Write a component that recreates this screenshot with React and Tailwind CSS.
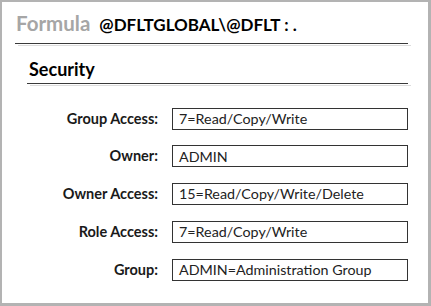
import React from 'react';

const fields = [
  { label: 'Group Access:', value: '7=Read/Copy/Write' },
  { label: 'Owner:', value: 'ADMIN' },
  { label: 'Owner Access:', value: '15=Read/Copy/Write/Delete' },
  { label: 'Role Access:', value: '7=Read/Copy/Write' },
  { label: 'Group:', value: 'ADMIN=Administration Group' },
];

const Divider = ({ className }) => (
  <div className={`h-px bg-[#3a3a3a] shadow-[3px_2px_0_#dcdcdc] ${className}`} />
);

export default function App() {
  return (
    <div
      className="w-[431px] h-[306px] bg-white border-l-2 border-t-2 border-r-[3px] border-b-[3px] border-[#b3b3b3] text-[#1a1a1a]"
      style={{ fontFamily: 'Lato, "Open Sans", sans-serif' }}
    >
      <div className="flex items-baseline gap-[9px] pl-[14px] pt-[11px] leading-none">
        <span className="text-[20.5px] font-bold text-[#a6a6a6]">Formula</span>
        <span className="text-[17px] font-bold text-black">@DFLTGLOBAL\@DFLT : .</span>
      </div>
      <Divider className="ml-[13px] w-[393px] mt-[9px]" />

      <div className="pl-[27px] pt-[16px] text-[18px] font-bold leading-none text-black">Security</div>
      <Divider className="ml-[25px] w-[381px] mt-[5px]" />

      <div className="mt-[24px] flex flex-col gap-[15.75px]">
        {fields.map((f) => (
          <div key={f.label} className="flex items-center">
            <div className="w-[156px] text-right text-[14.5px] font-bold">{f.label}</div>
            <div className="ml-[14px] w-[236px] h-[22px] border border-[#333] px-[6px] flex items-center text-[14.3px] text-[#222]">
              {f.value}
            </div>
          </div>
        ))}
      </div>
    </div>
  );
}
